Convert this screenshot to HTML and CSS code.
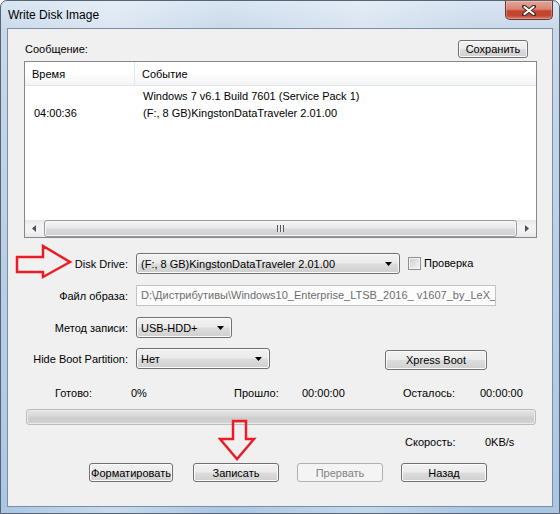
FILE: index.html
```html
<!DOCTYPE html>
<html lang="ru">
<head>
    <meta charset="UTF-8">
    <title>Write Disk Image</title>
    <link rel="stylesheet" href="styles.css">
</head>
<body>
    <div class="window">
        <div class="titlebar">
            <span class="title">Write Disk Image</span>
            <div class="close-btn">
                <svg width="14" height="11" viewBox="0 0 14 11">
                    <path d="M2 1.5 L12 9.5 M12 1.5 L2 9.5" stroke="#3b2a2a" stroke-width="4" stroke-linecap="round"/>
                    <path d="M2.5 2 L11.5 9 M11.5 2 L2.5 9" stroke="#fff" stroke-width="2.2" stroke-linecap="round"/>
                </svg>
            </div>
        </div>

        <div class="client">
            <div class="msg-head">
                <span>Сообщение:</span>
                <button class="btn btn-save">Сохранить</button>
            </div>

            <div class="log">
                <div class="log-header">
                    <div class="col-time">Время</div>
                    <div class="col-event">Событие</div>
                </div>
                <div class="log-body">
                    <div class="log-row">
                        <div class="col-time"></div>
                        <div class="col-event">Windows 7 v6.1 Build 7601 (Service Pack 1)</div>
                    </div>
                    <div class="log-row">
                        <div class="col-time">04:00:36</div>
                        <div class="col-event">(F:, 8 GB)KingstonDataTraveler 2.01.00</div>
                    </div>
                </div>
                <div class="hscroll">
                    <div class="sb-arrow">
                        <svg width="4" height="7" viewBox="0 0 4 7"><path d="M4 0 L0 3.5 L4 7 Z" fill="#505050"/></svg>
                    </div>
                    <div class="sb-track">
                        <div class="sb-thumb"><span class="grip"></span></div>
                    </div>
                    <div class="sb-arrow">
                        <svg width="4" height="7" viewBox="0 0 4 7"><path d="M0 0 L4 3.5 L0 7 Z" fill="#505050"/></svg>
                    </div>
                </div>
            </div>

            <div class="field row-drive">
                <label class="field-label">Disk Drive:</label>
                <div class="combo combo-drive">
                    <span>(F:, 8 GB)KingstonDataTraveler 2.01.00</span>
                    <svg class="combo-arrow" width="7" height="4" viewBox="0 0 7 4"><path d="M0 0 H7 L3.5 4 Z" fill="#000"/></svg>
                </div>
                <span class="check"></span>
                <span class="check-label">Проверка</span>
            </div>

            <div class="field row-file">
                <label class="field-label">Файл образа:</label>
                <div class="textbox">D:\Дистрибутивы\Windows10_Enterprise_LTSB_2016_ v1607_by_LeX_</div>
            </div>

            <div class="field row-method">
                <label class="field-label">Метод записи:</label>
                <div class="combo combo-method">
                    <span>USB-HDD+</span>
                    <svg class="combo-arrow" width="7" height="4" viewBox="0 0 7 4"><path d="M0 0 H7 L3.5 4 Z" fill="#000"/></svg>
                </div>
            </div>

            <div class="field row-hide">
                <label class="field-label">Hide Boot Partition:</label>
                <div class="combo combo-hide">
                    <span>Нет</span>
                    <svg class="combo-arrow" width="7" height="4" viewBox="0 0 7 4"><path d="M0 0 H7 L3.5 4 Z" fill="#000"/></svg>
                </div>
                <button class="btn btn-xpress">Xpress Boot</button>
            </div>

            <div class="status">
                <span class="st-w1">Готово:</span>
                <span class="st-w2">0%</span>
                <span class="st-w3">Прошло:</span>
                <span class="st-w4">00:00:00</span>
                <span class="st-w5">Осталось:</span>
                <span>00:00:00</span>
            </div>

            <div class="progress"></div>

            <div class="speed">
                <span class="speed-label">Скорость:</span>
                <span>0KB/s</span>
            </div>

            <div class="actions">
                <button class="btn btn-format">Форматировать</button>
                <button class="btn btn-write">Записать</button>
                <button class="btn btn-stop" disabled>Прервать</button>
                <button class="btn btn-back">Назад</button>
            </div>
        </div>

        <!-- red hint arrows drawn over the dialog -->
        <svg class="hint hint-right" width="58" height="37" viewBox="0 0 58 37">
            <path d="M2 13 H28 V2 L55 18 L28 33 V28 H2 Z" fill="none" stroke="#ec1c24" stroke-width="2.5" stroke-linejoin="miter"/>
        </svg>
        <svg class="hint hint-down" width="39" height="44" viewBox="0 0 39 44">
            <path d="M15 3 H28 V21 H36 L19 41 L2 21 H15 Z" fill="none" stroke="#ec1c24" stroke-width="2.5" stroke-linejoin="miter"/>
        </svg>
    </div>
</body>
</html>
```

FILE: styles.css
```css
* {
    box-sizing: border-box;
}
body {
    margin: 0;
    font-family: "Liberation Sans", Arial, sans-serif;
    font-size: 11px;
    color: #000;
}
.window {
    position: relative;
    width: 560px;
    height: 514px;
    border: 1px solid #5a6470;
    border-radius: 7px 7px 0 0;
    padding: 0 6px 6px;
    display: flex;
    flex-direction: column;
    background:
        linear-gradient(90deg, rgba(255,255,255,0) 0%, rgba(255,255,255,0.35) 20%, rgba(255,255,255,0) 40%, rgba(255,255,255,0.3) 65%, rgba(255,255,255,0) 85%),
        linear-gradient(180deg, #d9e5f2 0%, #c8d8ea 6%, #bdd1e8 40%, #aac6e4 100%);
}
.titlebar {
    position: relative;
    height: 27px;
    display: flex;
    align-items: center;
}
.title {
    margin-left: 1px;
    font-size: 12px;
    color: #000;
}
.close-btn {
    position: absolute;
    top: 0;
    right: 0;
    width: 48px;
    height: 19px;
    border: 1px solid #6a3530;
    border-top: none;
    border-radius: 0 0 5px 5px;
    background: linear-gradient(180deg, #e5a597 0%, #d88573 45%, #c6452f 55%, #c24631 80%, #d77a63 100%);
    display: flex;
    align-items: center;
    justify-content: center;
    box-shadow: inset 0 0 0 1px rgba(255,255,255,0.25);
}
.client {
    flex: 1;
    border: 1px solid #7d8ea3;
    background: #f0f0f0;
}

/* buttons */
.btn {
    font-family: inherit;
    font-size: 11px;
    color: #000;
    padding: 0;
    border: 1px solid #707070;
    border-radius: 3px;
    background: linear-gradient(180deg, #f2f2f2 0%, #ebebeb 48%, #dddddd 52%, #cfcfcf 100%);
    box-shadow: inset 0 0 0 1px #fbfbfb;
}
.btn:disabled {
    border-color: #adb2b5;
    background: #f4f4f4;
    color: #838383;
    box-shadow: none;
}

.msg-head {
    display: flex;
    justify-content: space-between;
    align-items: baseline;
    padding: 11px 24px 0 17px;
}
.btn-save {
    width: 70px;
    height: 18px;
}

/* message log */
.log {
    margin: 3px 0 0 16px;
    width: 513px;
    height: 177px;
    border: 1px solid #828790;
    background: #fff;
    display: flex;
    flex-direction: column;
}
.log-header {
    height: 24px;
    display: flex;
    align-items: center;
    background: linear-gradient(180deg, #ffffff 0%, #ffffff 45%, #f3f4f6 100%);
    border-bottom: 1px solid #e3e5e8;
}
.log-header .col-time {
    width: 110px;
    height: 100%;
    padding-left: 7px;
    display: flex;
    align-items: center;
    border-right: 1px solid #e3e8ee;
}
.log-header .col-event {
    padding-left: 7px;
}
.log-body {
    flex: 1;
    padding-top: 2px;
}
.log-row {
    display: flex;
    line-height: 17px;
}
.log-row .col-time {
    width: 110px;
    padding-left: 9px;
}
.log-row .col-event {
    padding-left: 8px;
}
.hscroll {
    height: 17px;
    display: flex;
    background: linear-gradient(180deg, #e8e8e8 0%, #f2f2f2 30%, #f2f2f2 70%, #e8e8e8 100%);
}
.sb-arrow {
    width: 18px;
    display: flex;
    align-items: center;
    justify-content: center;
}
.sb-track {
    flex: 1;
    padding: 0 1px;
}
.sb-thumb {
    height: 100%;
    border: 1px solid #9a9a9a;
    border-radius: 3px;
    background: linear-gradient(180deg, #f4f4f4 0%, #e9e9e9 45%, #d9d9d9 55%, #cfcfcf 100%);
    box-shadow: inset 0 0 0 1px #f8f8f8;
    display: flex;
    align-items: center;
    justify-content: center;
}
.grip {
    width: 7px;
    height: 7px;
    background: repeating-linear-gradient(90deg, #5a5a5a 0, #5a5a5a 1px, #e8e8e8 1px, #e8e8e8 3px);
}

/* form rows */
.field {
    display: flex;
    align-items: center;
    height: 21px;
}
.field-label {
    width: 120px;
    margin-right: 8px;
    text-align: right;
}
.row-drive {
    margin-top: 15px;
}
.row-file {
    margin-top: 11px;
}
.row-method {
    margin-top: 11px;
}
.row-hide {
    margin-top: 10px;
}
.combo {
    position: relative;
    height: 21px;
    padding-left: 4px;
    display: flex;
    align-items: center;
    border: 1px solid #707070;
    border-radius: 3px;
    background: linear-gradient(180deg, #f2f2f2 0%, #ebebeb 48%, #dddddd 52%, #cfcfcf 100%);
    box-shadow: inset 0 0 0 1px #fbfbfb;
}
.combo-arrow {
    position: absolute;
    right: 7px;
    top: 8px;
}
.combo-drive {
    width: 264px;
}
.combo-method {
    width: 96px;
}
.combo-hide {
    width: 134px;
}
.check {
    width: 13px;
    height: 13px;
    margin-left: 8px;
    border: 1px solid #8e8f8f;
    background: linear-gradient(135deg, #cbcbcb 0%, #e6e6e6 60%, #f4f4f4 100%);
    box-shadow: inset 0 0 0 1px #f4f4f4;
}
.check-label {
    margin-left: 3px;
    margin-top: -2px;
}
.textbox {
    width: 360px;
    height: 21px;
    padding-left: 4px;
    line-height: 19px;
    border: 1px solid #c0c4c8;
    background: #fcfcfc;
    color: #6d6d6d;
    white-space: nowrap;
    overflow: hidden;
}
.btn-xpress {
    align-self: flex-start;
    width: 102px;
    height: 20px;
    margin: 2px 0 0 115px;
}

/* progress block */
.status {
    display: flex;
    margin-top: 16px;
    padding-left: 47px;
    line-height: 17px;
}
.st-w1 { width: 76px; }
.st-w2 { width: 103px; }
.st-w3 { width: 68px; }
.st-w4 { width: 101px; }
.st-w5 { width: 77px; }
.progress {
    margin: 7px 0 0 18px;
    width: 510px;
    height: 16px;
    border: 1px solid #bcbcbc;
    border-radius: 3px;
    background: linear-gradient(180deg, #e6e6e6 0%, #dadada 35%, #cdcdcd 60%, #d3d3d3 100%);
    box-shadow: inset 0 0 0 1px #eaeaea;
}
.speed {
    display: flex;
    margin-top: 9px;
    padding-left: 397px;
    line-height: 17px;
}
.speed-label {
    width: 80px;
}
.actions {
    display: flex;
    margin-top: 12px;
    padding-left: 81px;
}
.actions .btn {
    height: 19px;
    width: 86px;
}
.actions .btn-format {
    width: 84px;
}
.btn-write {
    margin-left: 20px;
}
.btn-stop {
    margin-left: 18px;
}
.btn-back {
    margin-left: 18px;
}

.hint {
    position: absolute;
}
.hint-right {
    left: 14px;
    top: 243px;
}
.hint-down {
    left: 217px;
    top: 417px;
}
```
